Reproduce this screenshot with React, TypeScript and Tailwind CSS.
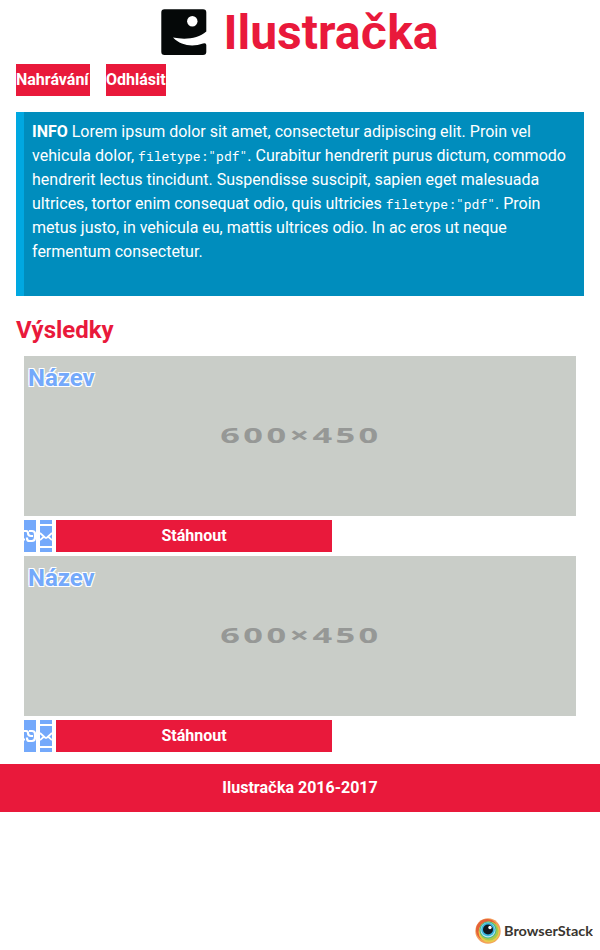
import React from "react";

const Logo = () => (
  <svg width="46" height="47" viewBox="0 0 46 47" className="shrink-0" aria-label="Ilustračka">
    <path
      d="M3.5.3H42Q45.3.3 45.3 3.5V22.500C37 29.500 25 31 12 28.500C20 37 32 38 42 34.500Q45.300 33.500 45.300 36V43Q45.300 46 42 46H3.500Q.3 46 .3 42.800V3.500Q.3.3 3.500.3Z"
      fill="#050808"
    />
    <circle cx="31.300" cy="12.300" r="5.200" fill="#fff" />
  </svg>
);

const LinkIcon = () => (
  <svg width="12" height="32" viewBox="0 0 12 32" className="bg-[#74a9fb]">
    <g fill="none" stroke="#fff" strokeWidth="2.200">
      <path d="M0 11H2Q4 11 4 13Q4 16 7 16H9" />
      <path d="M5 11H8Q11 11 11 14V17.500Q11 21 8 21H5.500Q3 21 3 18.500V17.500" />
      <path d="M0 19.500H1" />
    </g>
  </svg>
);

const MailIcon = () => (
  <svg width="12" height="32" viewBox="0 0 12 32" className="bg-[#74a9fb]">
    <g fill="none" stroke="#fff" strokeWidth="2">
      <path d="M0 5H12M0 27H12" />
      <path d="M0 13L5 17.500Q6 18.300 7 17.500L12 13M0 20L3.500 17M12 20L8.500 17" strokeWidth="1.700" />
    </g>
  </svg>
);

const Result = () => (
  <article className="mb-1 px-2">
    <div className="relative h-40 bg-[#c9cdc8]">
      <svg width="552" height="160" className="block">
        <text
          transform="translate(196.300 87.400) scale(1.6 1)"
          letterSpacing="2.120"
          fontFamily="Open Sans, sans-serif"
          fontWeight="700"
          fontSize="21.500"
          fill="#969896"
        >
          600×450
        </text>
      </svg>
      <h3 className="absolute top-1 left-1 text-2xl leading-9 font-bold text-[#74a9fb] [text-shadow:1px_1px_0_#fff,-1px_-1px_0_#fff,1px_-1px_0_#fff,-1px_1px_0_#fff]">
        Název
      </h3>
    </div>
    <div className="mt-1 flex gap-1">
      <LinkIcon />
      <MailIcon />
      <button className="h-8 w-[276px] bg-[#e9193b] pb-px font-bold text-white">Stáhnout</button>
    </div>
  </article>
);

const Code = () => (
  <code className="font-['Roboto_Mono','Noto_Sans_Mono','Liberation_Mono',monospace] text-[13px] leading-none">filetype:"pdf"</code>
);

export default function App() {
  return (
    <div className="flex h-[950px] flex-col bg-white font-['Roboto',sans-serif] text-base leading-6">
      <header className="flex h-16 items-center justify-center gap-4 text-[#e9193b]">
        <Logo />
        <h1 className="pt-px text-5xl leading-[64px] font-bold">
          Ilustra<span className="font-['Liberation_Sans',sans-serif] leading-none">č</span>ka
        </h1>
      </header>
      <nav className="flex gap-4 px-4 leading-8 font-bold text-white">
        <a className="h-8 w-[74px] bg-[#e9193b]">Nahrávání</a>
        <a className="h-8 w-[60px] bg-[#e9193b]">Odhlásit</a>
      </nav>
      <main className="px-4 pt-4">
        <section className="h-[184px] border-l-8 border-[#00a8e1] bg-[#008dbd] p-2 text-white">
          <p>
            <strong>INFO</strong> Lorem ipsum dolor sit amet, consectetur adipiscing elit. Proin vel{" "}
            <span className="tracking-[0.050px]">vehicula dolor,</span> <Code />. Curabitur hendrerit purus
            dictum, commodo hendrerit lectus tincidunt. Suspendisse suscipit, sapien eget malesuada ultrices,
            tortor enim consequat odio, quis ultricies <Code />. Proin metus justo, in vehicula eu, mattis
            ultrices odio. In ac eros ut neque fermentum consectetur.
          </p>
        </section>
        <h2 className="mt-4 mb-2 text-2xl leading-9 font-bold text-[#e9193b]">Výsledky</h2>
        <Result />
        <Result />
      </main>
      <footer className="mt-2 h-12 bg-[#e9193b] text-center leading-[48px] font-bold text-white">
        Ilustra<span className="font-['Liberation_Sans',sans-serif] leading-none">č</span>ka 2016-2017
      </footer>
      <div className="mt-auto flex h-[38px] items-center justify-end gap-[3px] pr-[7px]">
        <svg width="26" height="26" viewBox="0 0 26 26">
          <circle cx="13" cy="13" r="12.700" fill="#f4a05b" />
          <circle cx="12" cy="12" r="11" fill="#e56138" />
          <circle cx="14" cy="14" r="10.500" fill="#e9c94b" />
          <circle cx="14" cy="13" r="9.500" fill="#a8c94a" />
          <circle cx="13" cy="12" r="8.500" fill="#49b58b" />
          <circle cx="13" cy="12" r="7.500" fill="#b8e4f1" />
          <circle cx="13" cy="11.500" r="6.800" fill="#39b5de" />
          <circle cx="13" cy="11.500" r="5" fill="#111820" />
          <circle cx="15" cy="9.500" r="1.700" fill="#fff" />
        </svg>
        <svg width="89" height="20" viewBox="0 0 89 20">
          <text
            x="0"
            y="14.500"
            textLength="89"
            lengthAdjust="spacingAndGlyphs"
            fontFamily="Lato, sans-serif"
            fontWeight="700"
            fontSize="13.500"
            fill="#39352f"
          >
            BrowserStack
          </text>
        </svg>
      </div>
    </div>
  );
}
